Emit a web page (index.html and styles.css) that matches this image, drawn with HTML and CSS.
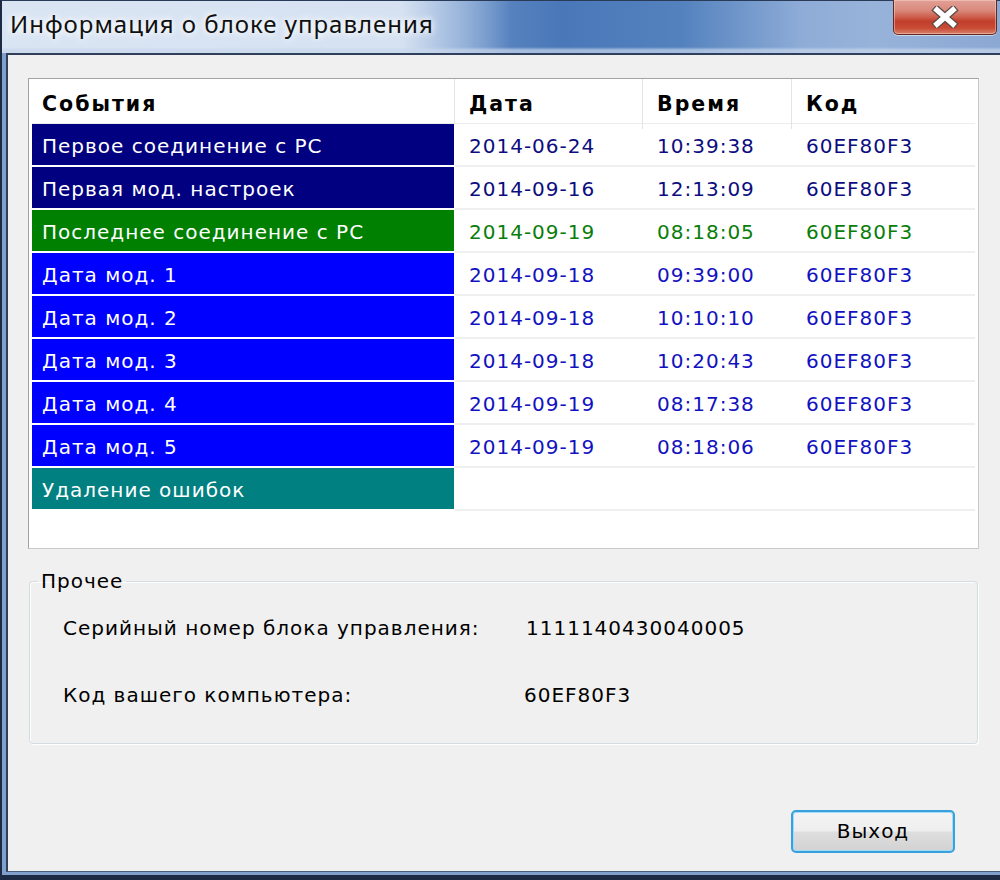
FILE: index.html
```html
<!DOCTYPE html>
<html lang="ru">
<head>
<meta charset="utf-8">
<title>Информация о блоке управления</title>
<link rel="stylesheet" href="styles.css">
</head>
<body>
<div class="window">
  <div class="titlebar">
    <span class="title">Информация о блоке управления</span>
    <div class="close">
      <svg width="30" height="22" viewBox="0 0 30 22">
        <path d="M7 4 L23 18 M23 4 L7 18" stroke="#5a4a48" stroke-width="8" stroke-linecap="square" fill="none"/>
        <path d="M7 4 L23 18 M23 4 L7 18" stroke="#ffffff" stroke-width="5.5" stroke-linecap="square" fill="none"/>
      </svg>
    </div>
  </div>
  <div class="frame">
    <div class="frame-inner">
      <div class="client">
        <div class="list">
          <div class="head">
            <div class="hcell">События</div>
            <div class="hcell">Дата</div>
            <div class="hcell">Время</div>
            <div class="hcell">Код</div>
          </div>
          <div class="row navy"><div class="ev">Первое соединение с PC</div><div class="c">2014-06-24</div><div class="c">10:39:38</div><div class="c">60EF80F3</div></div>
          <div class="row navy"><div class="ev">Первая мод. настроек</div><div class="c">2014-09-16</div><div class="c">12:13:09</div><div class="c">60EF80F3</div></div>
          <div class="row green"><div class="ev">Последнее соединение с PC</div><div class="c">2014-09-19</div><div class="c">08:18:05</div><div class="c">60EF80F3</div></div>
          <div class="row blue"><div class="ev">Дата мод. 1</div><div class="c">2014-09-18</div><div class="c">09:39:00</div><div class="c">60EF80F3</div></div>
          <div class="row blue"><div class="ev">Дата мод. 2</div><div class="c">2014-09-18</div><div class="c">10:10:10</div><div class="c">60EF80F3</div></div>
          <div class="row blue"><div class="ev">Дата мод. 3</div><div class="c">2014-09-18</div><div class="c">10:20:43</div><div class="c">60EF80F3</div></div>
          <div class="row blue"><div class="ev">Дата мод. 4</div><div class="c">2014-09-19</div><div class="c">08:17:38</div><div class="c">60EF80F3</div></div>
          <div class="row blue"><div class="ev">Дата мод. 5</div><div class="c">2014-09-19</div><div class="c">08:18:06</div><div class="c">60EF80F3</div></div>
          <div class="row teal"><div class="ev">Удаление ошибок</div><div class="c"></div><div class="c"></div><div class="c"></div></div>
        </div>
        <fieldset class="group">
          <legend>Прочее</legend>
          <div class="info">
            <span class="lbl">Серийный номер блока управления:</span>
            <span class="val">1111140430040005</span>
          </div>
          <div class="info">
            <span class="lbl">Код вашего компьютера:</span>
            <span class="val val2">60EF80F3</span>
          </div>
        </fieldset>
        <div class="actions">
          <button class="btn" type="button">Выход</button>
        </div>
      </div>
    </div>
  </div>
</div>
</body>
</html>
```
FILE: styles.css
```css
html, body {
  margin: 0;
  padding: 0;
  background: #000;
}

.window {
  width: 1000px;
  height: 880px;
  display: flex;
  flex-direction: column;
  overflow: hidden;
  font-family: "DejaVu Sans", Tahoma, sans-serif;
  font-size: 20px;
  letter-spacing: 1px;
  color: #000;
}

.titlebar {
  height: 53px;
  flex: none;
  display: flex;
  justify-content: space-between;
  align-items: flex-start;
  box-sizing: border-box;
  border-left: 2px solid #1c2a44;
  border-top: 1px solid #2a3b58;
  background:
    linear-gradient(to bottom, rgba(255,255,255,0) 0, rgba(255,255,255,0) 46px, rgba(200,215,236,0.7) 49px, rgba(200,215,236,0.7) 52px),
    linear-gradient(to right, rgba(222,232,245,0.95) 0, rgba(222,232,245,0.93) 400px, rgba(200,216,238,0.6) 455px, rgba(200,216,238,0) 510px),
    linear-gradient(to right, #8fabd6 0, #5c87c2 480px, #4a77b8 560px, #5482be 680px, #8eacd7 800px, #98b3da 870px, #8ba8d3 1000px);
}

.title {
  font-family: "Noto Sans", "Open Sans", sans-serif;
  font-size: 24px;
  letter-spacing: 1px;
  line-height: 1;
  padding: 11px 0 0 8px;
  color: #101010;
  text-shadow: 0 0 6px #fff, 0 0 10px #fff;
}

.close {
  width: 104px;
  height: 35px;
  margin-right: 3px;
  margin-top: -1px;
  box-sizing: border-box;
  border: 1px solid #5e2a22;
  border-top: none;
  border-radius: 0 0 5px 5px;
  background: linear-gradient(to bottom, #e2a096 0, #d98a7c 30%, #cc5a48 52%, #c23e2c 62%, #c84a34 82%, #d8806a 100%);
  box-shadow: inset 0 0 0 1px rgba(255,220,210,0.45), 0 1px 0 rgba(255,255,255,0.5);
  display: flex;
  justify-content: center;
  align-items: center;
}

.frame {
  flex: 1;
  display: flex;
  border-left: 2px solid #1c2a44;
  border-bottom: 5px solid #1c2a44;
}

.frame-inner {
  flex: 1;
  display: flex;
  border-left: 4px solid #819fcd;
  border-bottom: 3px solid #819fcd;
}

.client {
  flex: 1;
  display: flex;
  flex-direction: column;
  background: #f0f0f0;
  border-left: 2px solid #2f3f5c;
  border-top: 2px solid #2f3f5c;
  border-bottom: 1px solid #4a5c7c;
  padding: 23px 21px 0 20px;
}

/* list view */
.list {
  height: 471px;
  box-sizing: border-box;
  background: #fff;
  border: 1px solid #a3a3a3;
  border-right-color: #c8c8c8;
  border-bottom-color: #c8c8c8;
  padding: 0 3px;
}

.head {
  display: grid;
  grid-template-columns: 423px 188px 149px 1fr;
  height: 45px;
  border-bottom: 1px solid #ececec;
  box-sizing: border-box;
}

.hcell {
  font-weight: bold;
  font-size: 20.5px;
  letter-spacing: 2px;
  padding-left: 10px;
  line-height: 50px;
  border-right: 1px solid #e4e4e4;
}
.hcell + .hcell { padding-left: 14px; }
.hcell:last-child { border-right: none; }

.row {
  display: grid;
  grid-template-columns: 423px 188px 149px 1fr;
  grid-template-rows: 43px;
  height: 43px;
}

.row > div {
  box-sizing: border-box;
  height: 43px;
  border-bottom: 2px solid #efefef;
  padding-top: 3px;
  line-height: 38px;
  white-space: nowrap;
  overflow: hidden;
}

.ev {
  color: #fff;
  padding-left: 10px;
  border-right: 1px solid #fff;
}
.row > .ev { border-bottom-color: #fff; }

.c { padding-left: 14px; }

.navy .ev { background: #000080; }
.navy .c { color: #0d0d80; }
.green .ev { background: #008000; }
.green .c { color: #0a7d0a; }
.blue .ev { background: #0000ff; }
.blue .c { color: #1212c0; }
.teal .ev { background: #008080; }

/* group box */
.group {
  margin: 21px 1px 0 1px;
  padding: 14px 0 15px 33px;
  border: 1px solid #d3dce3;
  border-radius: 4px;
  box-shadow: inset 1px 1px 0 #fff, 1px 1px 0 #fff;
  min-height: 0;
}

.group legend {
  padding: 0 3px;
  margin-left: -25px;
  line-height: 22px;
}

.info {
  display: grid;
  grid-template-columns: 463px 1fr;
  height: 67px;
  align-items: center;
}

.info:first-of-type { margin-top: -12px; }

.val2 { margin-left: -2px; }

.actions {
  display: flex;
  justify-content: flex-end;
  padding: 66px 24px 0 0;
}

.btn {
  width: 164px;
  height: 43px;
  font-family: "DejaVu Sans", Tahoma, sans-serif;
  font-size: 20px;
  letter-spacing: 1px;
  color: #000;
  border: 2px solid #3aa0dc;
  border-radius: 5px;
  box-shadow: inset 0 0 0 1px #9fdcf6;
  background: linear-gradient(to bottom, #f4f4f4 0, #eeeeee 48%, #dedede 52%, #d2d2d2 100%);
  padding: 0 0 2px 0;
}
```
